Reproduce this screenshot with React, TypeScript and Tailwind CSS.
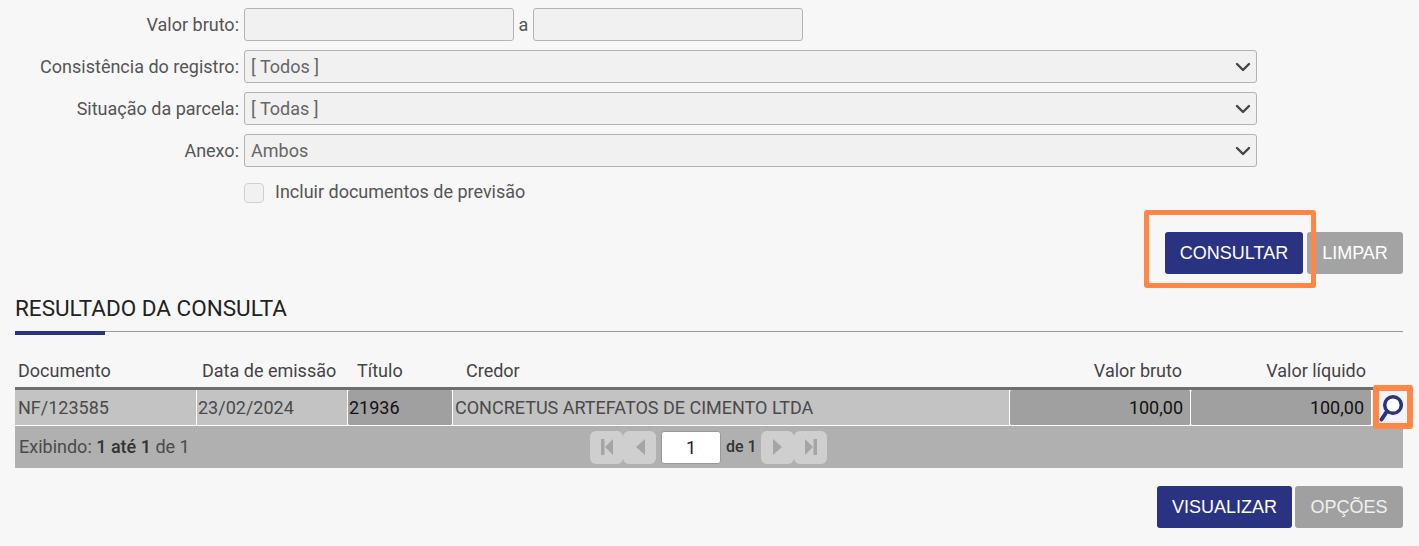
import React from "react";
import { ChevronDown } from "lucide-react";

function Label({ children }: { children: React.ReactNode }) {
  return <label className="w-[240px] pr-px text-right text-[18px] text-[#555]">{children}</label>;
}

function FakeSelect({ value }: { value: string }) {
  return (
    <div className="w-[1013px] h-[33px] flex items-center justify-between pl-[6px] pr-[7px] bg-[#f1f1f1] border border-[#b3b3b3] rounded-[3px] text-[18px] text-[#666]">
      <span className="mt-[-1px]">{value}</span>
      <ChevronDown size={24} strokeWidth={2.4} className="text-[#444] mr-[-6px]" />
    </div>
  );
}

function PagerBtn({ children }: { children: React.ReactNode }) {
  return (
    <div className="w-[33px] h-[33px] rounded-[6px] bg-[#cfcfcf] flex items-center justify-center">
      <svg width="14" height="20" viewBox="0 0 14 20" className="fill-[#a5a5a5]">
        {children}
      </svg>
    </div>
  );
}

export default function App() {
  return (
    <div className="relative w-[1419px] h-[546px] overflow-hidden bg-[#f7f7f7] pt-2 font-['Roboto',sans-serif] text-[18px] text-[#555]">
      <div className="flex flex-col gap-[9px]">
        <div className="flex items-center gap-1">
          <Label>Valor bruto:</Label>
          <div className="w-[270px] h-[33px] bg-[#f1f1f1] border border-[#b3b3b3] rounded-[3px]" />
          <span className="w-[11px] text-center">a</span>
          <div className="w-[270px] h-[33px] bg-[#f1f1f1] border border-[#b3b3b3] rounded-[3px]" />
        </div>
        <div className="flex items-center gap-1">
          <Label>Consistência do registro:</Label>
          <FakeSelect value="[ Todos ]" />
        </div>
        <div className="flex items-center gap-1">
          <Label>Situação da parcela:</Label>
          <FakeSelect value="[ Todas ]" />
        </div>
        <div className="flex items-center gap-1">
          <Label>Anexo:</Label>
          <FakeSelect value="Ambos" />
        </div>
      </div>

      <div className="flex items-center mt-[16px] ml-[244px] h-[20px]">
        <div className="w-[20px] h-[20px] bg-[#f1f1f1] border border-[#d0d0d0] rounded-[4px]" />
        <span className="ml-[11px] mt-[-3px]">Incluir documentos de previsão</span>
      </div>

      <div className="flex justify-end gap-1 mt-[29px] mr-4 font-['Liberation_Sans',sans-serif] text-[18px] text-white">
        <div className="w-[138px] h-[42px] flex items-center justify-center bg-[#2a3282] rounded-[3px]">CONSULTAR</div>
        <div className="w-[96px] h-[42px] flex items-center justify-center bg-[#a3a3a3] rounded-[3px]">LIMPAR</div>
      </div>

      <div className="mr-4 ml-[15px] mt-[20px]">
        <h2 className="text-[22.5px] leading-[28px] text-[#222]">RESULTADO DA CONSULTA</h2>
        <div className="mt-[9px] h-px bg-[#999]">
          <div className="w-[90px] h-[4px] bg-[#2a3282]" />
        </div>

        <div className="grid grid-cols-[182px_151px_105px_557px_181px_181px_31px] mt-[23px] mb-[2px] h-[30px] items-center text-[18px] text-[#444]">
          <span className="pl-[3px]">Documento</span>
          <span className="pl-[5px]">Data de emissão</span>
          <span className="pl-[9px]">Título</span>
          <span className="pl-[13px]">Credor</span>
          <span className="text-right pr-[9px]">Valor bruto</span>
          <span className="text-right pr-[6px]">Valor líquido</span>
          <span />
        </div>

        <div className="h-[3px] bg-[#6e6e6e] mr-[1px]" />
        <div className="grid grid-cols-[182px_151px_105px_557px_181px_181px_31px] h-[36px] text-[18px] text-[#4a4a4a]">
          <div className="bg-[#c3c3c3] border-r border-b border-white pl-[3px] pb-px flex items-center">NF/123585</div>
          <div className="bg-[#c3c3c3] border-r border-b border-white pl-[1px] pb-px flex items-center">23/02/2024</div>
          <div className="bg-[#a0a0a0] border-r border-b border-white rounded-[2px] pl-[1px] pb-px flex items-center text-[#111]">21936</div>
          <div className="bg-[#c3c3c3] border-r border-b border-white pl-[2px] pb-px flex items-center">CONCRETUS ARTEFATOS DE CIMENTO LTDA</div>
          <div className="bg-[#a0a0a0] border-r border-b border-white rounded-[2px] pr-[7px] pb-px flex items-center justify-end text-[#111]">100,00</div>
          <div className="bg-[#a0a0a0] border-r border-b border-white rounded-[2px] pr-[7px] pb-px flex items-center justify-end text-[#111]">100,00</div>
          <div className="bg-[#f4f4f8] border-b border-white flex items-center justify-end">
            <svg width="24" height="28" viewBox="0 0 24 28" fill="none">
              <circle cx="14" cy="11" r="8.3" fill="#fff" stroke="#2a3282" strokeWidth="3.5" />
              <path d="M7.5 18 L2.5 25.5" stroke="#2a3282" strokeWidth="4" strokeLinecap="round" />
            </svg>
          </div>
        </div>

        <div className="relative h-[42px] bg-[#b0b0b0] flex items-center justify-center text-[18px] text-[#4a4a4a]">
          <span className="absolute left-[4px] top-[7px]">
            Exibindo: <span className="text-[#333] font-medium">1 até 1</span> de 1
          </span>
          <div className="flex items-center mr-[1px]">
            <PagerBtn>
              <rect x="1" y="2" width="3.5" height="16" />
              <path d="M13 2 V18 L5 10 Z" />
            </PagerBtn>
            <PagerBtn>
              <path d="M12 2 V18 L3 10 Z" />
            </PagerBtn>
            <div className="w-[60px] h-[33px] ml-[5px] mr-[5px] bg-white border border-[#999] rounded-[3px] flex items-center justify-center text-[#222]">1</div>
            <span className="w-[35px] text-[#333] text-[16px] font-medium">de 1</span>
            <PagerBtn>
              <path d="M2 2 V18 L11 10 Z" />
            </PagerBtn>
            <PagerBtn>
              <path d="M1 2 V18 L9 10 Z" />
              <rect x="9.5" y="2" width="3.5" height="16" />
            </PagerBtn>
          </div>
        </div>

        <div className="flex justify-end gap-[3px] mt-[18px] font-['Liberation_Sans',sans-serif] text-[18px] text-white">
          <div className="w-[135px] h-[42px] flex items-center justify-center bg-[#2a3282] rounded-[3px]">VISUALIZAR</div>
          <div className="w-[108px] h-[42px] flex items-center justify-center bg-[#a0a0a0] rounded-[3px] text-[#f0f0f0]">OPÇÕES</div>
        </div>
      </div>

      {/* marcações laranja por cima da tela */}
      <div className="absolute left-[1144px] top-[210px] w-[172px] h-[78px] border-[5px] border-[#ff8645] rounded-[3px]" />
      <div className="absolute left-[1373px] top-[385px] w-[40px] h-[44px] border-[6px] border-[#ff8645] rounded-[3px]" />
    </div>
  );
}
